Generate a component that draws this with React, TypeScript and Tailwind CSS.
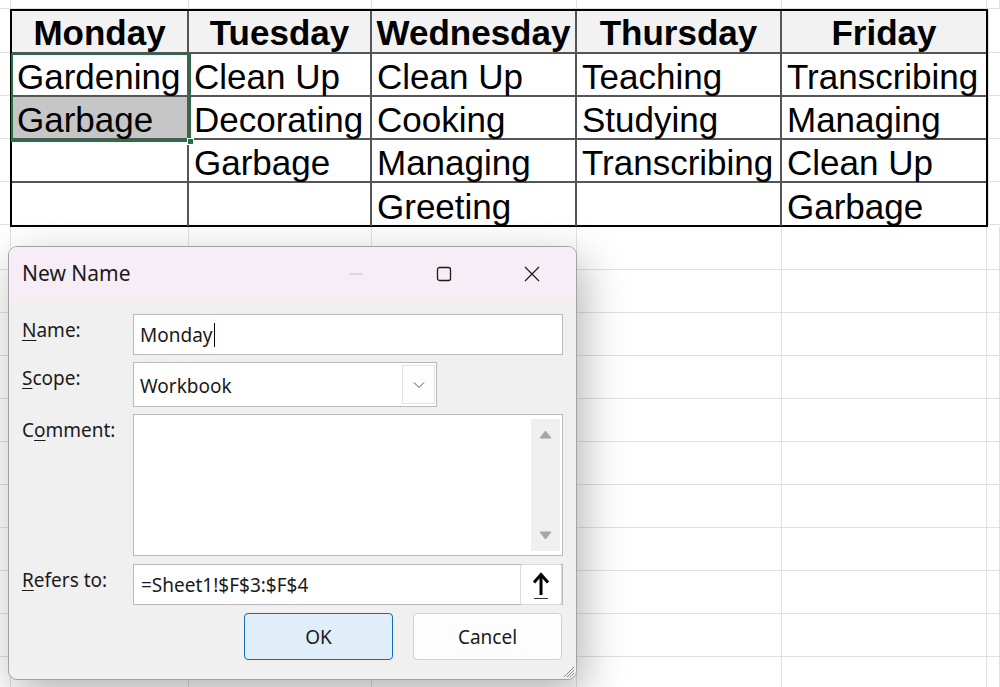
import React from "react";

const COLS = [11, 178, 183, 205, 205, 205, 13];
const GRID = "border-[#e1e1e1]";

const days = ["Monday", "Tuesday", "Wednesday", "Thursday", "Friday"];
const data: string[][] = [
  ["Gardening", "Clean Up", "Clean Up", "Teaching", "Transcribing"],
  ["Garbage", "Decorating", "Cooking", "Studying", "Managing"],
  ["", "Garbage", "Managing", "Transcribing", "Clean Up"],
  ["", "", "Greeting", "", "Garbage"],
];

function PlainRow({ h }: { h: number }) {
  return (
    <div className="flex shrink-0" style={{ height: h }}>
      {COLS.map((w, i) => (
        <div
          key={i}
          className={`shrink-0 border-r border-b ${GRID}`}
          style={{ width: w }}
        />
      ))}
    </div>
  );
}

function Table() {
  const inner = [177, 183, 205, 205, 204];
  return (
    <div className="relative w-[978px] h-[218px] border-2 border-black bg-white flex flex-col shrink-0">
      <div className="flex h-[43px] bg-[#f2f2f2]">
        {days.map((d, i) => (
          <div
            key={d}
            className={`shrink-0 h-full flex items-center justify-center font-bold border-b-2 border-[#555] ${i < 4 ? "border-r-2" : ""}`}
            style={{ width: inner[i] }}
          >
            <span className="leading-[43px] pt-[2px]">{d}</span>
          </div>
        ))}
      </div>
      {data.map((row, r) => (
        <div key={r} className="flex h-[43px]">
          {row.map((c, i) => (
            <div
              key={i}
              className={`shrink-0 h-full flex items-center pl-[5px] whitespace-nowrap ${r < 3 ? "border-b-2" : ""} ${i < 4 ? "border-r-2" : ""} border-[#555] ${r === 1 && i === 0 ? "bg-[#c6c6c6]" : ""}`}
              style={{ width: inner[i] }}
            >
              <span className="leading-[43px] pt-[3px]">{c}</span>
            </div>
          ))}
        </div>
      ))}
      {/* selection overlay */}
      <div className="absolute left-[-1px] top-[42px] w-[180px] h-[89px] border-2 border-[#217346] pointer-events-none" />
      <div className="absolute left-[175px] top-[127px] w-[7px] h-[7px] bg-[#217346] border border-white" />
    </div>
  );
}

function Sheet() {
  const below = Array.from({ length: 11 }, (_, i) => i);
  return (
    <div
      className="w-[1000px] h-[687px] overflow-hidden bg-white flex flex-col text-[35px] text-black"
      style={{ fontFamily: '"Liberation Sans", Arial, sans-serif' }}
    >
      <PlainRow h={9} />
      <div className="flex shrink-0">
        <div className="w-[10px] shrink-0 flex flex-col pt-[1px]">
          {[0, 1, 2, 3, 4].map((i) => (
            <div key={i} className={`h-[43px] border-b ${GRID}`} />
          ))}
        </div>
        <Table />
        <div className="w-[12px] shrink-0 flex flex-col pt-[1px]">
          {[0, 1, 2, 3, 4].map((i) => (
            <div key={i} className={`h-[43px] border-b border-l ${GRID}`} />
          ))}
        </div>
      </div>
      {below.map((i) => (
        <PlainRow key={i} h={43} />
      ))}
    </div>
  );
}

function Dialog() {
  return (
    <div
      className="absolute left-[8px] top-[246px] w-[569px] h-[434px] rounded-[9px] border border-[#a2a2a2] bg-[#f0f0f0] overflow-hidden flex flex-col text-[#1a1a1a] shadow-[6px_14px_44px_rgba(0,0,0,0.3)]"
      style={{ fontFamily: '"Noto Sans", "Open Sans", sans-serif' }}
    >
      <div className="h-[53px] shrink-0 bg-[#f7edf6] flex items-center">
        <span className="pl-[13px] text-[21px] leading-[24px] pb-[1px]">New Name</span>
        <div className="ml-auto flex h-full">
          <div className="w-[88px] h-full flex items-center justify-center">
            <svg width="16" height="16" viewBox="0 0 16 16">
              <line x1="1" y1="8" x2="15" y2="8" stroke="#c4c4c4" strokeWidth="1" />
            </svg>
          </div>
          <div className="w-[88px] h-full flex items-center justify-center">
            <svg width="16" height="16" viewBox="0 0 16 16">
              <rect x="1.5" y="1.5" width="13" height="13" rx="2" fill="none" stroke="#1a1a1a" strokeWidth="1.3" />
            </svg>
          </div>
          <div className="w-[88px] h-full flex items-center justify-center">
            <svg width="16" height="16" viewBox="0 0 16 16">
              <path d="M1 1 L15 15 M15 1 L1 15" stroke="#1a1a1a" strokeWidth="1.2" />
            </svg>
          </div>
        </div>
      </div>
      <div className="flex flex-col pl-[13px] pt-[14px] text-[19px]">
        <div className="flex items-start">
          <div className="w-[111px] pt-[4px] leading-[24px]">
            <span className="underline underline-offset-[3px]">N</span>ame:
          </div>
          <div className="w-[430px] h-[41px] bg-white border border-[#b9b9b9] flex items-center pl-[6px] leading-[24px]">
            <span>Monday</span>
            <span className="w-[1px] h-[24px] bg-black ml-[1px]" />
          </div>
        </div>
        <div className="flex items-start mt-[7px]">
          <div className="w-[111px] pt-[4px] leading-[24px]">
            <span className="underline underline-offset-[3px]">S</span>cope:
          </div>
          <div className="w-[304px] h-[45px] bg-white border border-[#b9b9b9] flex items-center pl-[6px] pr-[1px] leading-[24px]">
            <span className="pt-[2px]">Workbook</span>
            <div className="ml-auto w-[33px] h-[39px] border border-[#e3e3e3] bg-[#fdfdfd] flex items-center justify-center">
              <svg width="12" height="8" viewBox="0 0 12 8">
                <polyline points="1,1.5 6,6.5 11,1.5" fill="none" stroke="#555" strokeWidth="1" />
              </svg>
            </div>
          </div>
        </div>
        <div className="flex items-start mt-[7px]">
          <div className="w-[111px] pt-[4px] leading-[24px]">
            C<span className="underline underline-offset-[3px]">o</span>mment:
          </div>
          <div className="w-[430px] h-[142px] bg-white border border-[#b9b9b9] flex justify-end p-[4px] pr-[2px]">
            <div className="w-[29px] h-full bg-[#f0f0f0] flex flex-col items-center justify-between py-[11px]">
              <svg width="13" height="9" viewBox="0 0 13 9">
                <path d="M6.5 1 L12 8 L1 8 Z" fill="#a6a6a6" stroke="#a6a6a6" strokeWidth="1" strokeLinejoin="round" />
              </svg>
              <svg width="13" height="9" viewBox="0 0 13 9">
                <path d="M1 1 L12 1 L6.5 8 Z" fill="#a6a6a6" stroke="#a6a6a6" strokeWidth="1" strokeLinejoin="round" />
              </svg>
            </div>
          </div>
        </div>
        <div className="flex items-start mt-[8px]">
          <div className="w-[111px] pt-[4px] leading-[24px]">
            <span className="underline underline-offset-[3px]">R</span>efers to:
          </div>
          <div className="w-[430px] h-[41px] bg-white border border-[#b9b9b9] flex items-center pl-[7px] pr-[0px] leading-[24px]">
            <span className="pt-[1px]">=Sheet1!$F$3:$F$4</span>
            <div className="ml-auto w-[42px] h-[41px] border border-[#dcdcdc] rounded-[3px] bg-white flex items-center justify-center">
              <svg width="22" height="30" viewBox="0 0 22 30">
                <path d="M11 25 L11 6" stroke="#000" strokeWidth="3" />
                <path d="M4 12.5 L11 4.5 L18 12.5" fill="none" stroke="#000" strokeWidth="3" />
                <line x1="4" y1="28.5" x2="18" y2="28.5" stroke="#333" strokeWidth="1" />
              </svg>
            </div>
          </div>
        </div>
        <div className="flex justify-end gap-[20px] mt-[8px] pr-[14px]">
          <div className="w-[149px] h-[47px] rounded-[4px] border border-[#0f6cbd] bg-[#e0eef9] flex items-center justify-center text-[19px] pt-[2px]">
            OK
          </div>
          <div className="w-[149px] h-[47px] rounded-[4px] border border-[#d0d0d0] bg-[#fdfdfd] flex items-center justify-center text-[19px] pt-[2px]">
            Cancel
          </div>
        </div>
      </div>
      <svg className="absolute right-[1px] bottom-[1px]" width="14" height="14" viewBox="0 0 14 14">
        <path d="M13 3 L3 13 M13 6 L6 13 M13 9 L9 13" stroke="#8a8a8a" strokeWidth="1" />
      </svg>
    </div>
  );
}

export default function App() {
  return (
    <div className="relative w-[1000px] h-[687px] overflow-hidden bg-white">
      <Sheet />
      <Dialog />
    </div>
  );
}
